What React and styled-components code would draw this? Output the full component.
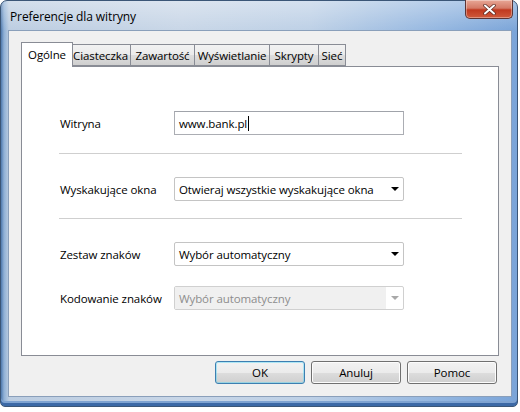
import styled, { createGlobalStyle } from 'styled-components';

const GlobalStyle = createGlobalStyle`
  html, body {
    margin: 0;
    background: #ffffff;
  }
  body {
    font-family: 'Open Sans', 'Noto Sans', sans-serif;
    font-size: 11.5px;
    letter-spacing: -0.1px;
    color: #000;
  }
`;

const Window = styled.div`
  box-sizing: border-box;
  width: 518px;
  height: 407px;
  display: flex;
  flex-direction: column;
  padding: 0 5px 9px 7px;
  border: 1px solid #3b5677;
  border-radius: 7px 7px 5px 5px;
  background:
    linear-gradient(180deg, rgba(255, 255, 255, 0.35) 0, rgba(255, 255, 255, 0) 30px),
    linear-gradient(90deg, #4f79ad 0, #8fb0d6 3px, #bccde1 8px, #c8d6e7 35%, #bdd0e6 60%, #93b6e0 85%, #7aa4d8 100%);
  box-shadow: inset 0 -3px 0 #3c69a6, inset 0 -5px 0 #7fa3d1;
`;

const TitleBar = styled.div`
  height: 29px;
  display: flex;
  justify-content: space-between;
  align-items: flex-start;
`;

const Title = styled.span`
  margin-top: 7px;
  padding-left: 2px;
  font-size: 12px;
  color: #000;
`;

const CloseButton = styled.div`
  box-sizing: border-box;
  width: 48px;
  height: 19px;
  margin-top: -1px;
  margin-right: -1px;
  display: flex;
  align-items: center;
  justify-content: center;
  border: 1px solid #5c3434;
  border-top: none;
  border-radius: 0 0 5px 5px;
  background: linear-gradient(180deg, #e8a796 0%, #d47a66 45%, #c0391f 55%, #cf5a3c 100%);
  box-shadow: inset 0 0 0 1px rgba(255, 255, 255, 0.35);
`;

const Client = styled.div`
  flex: 1;
  display: flex;
  flex-direction: column;
  padding: 11px 12px 12px 12px;
  background: #f0f0f0;
  border: 1px solid #8a9fba;
`;

const TabRow = styled.div`
  display: flex;
  align-items: flex-end;
  padding-left: 2px;
  height: 24px;
  position: relative;
  z-index: 1;
`;

const Tab = styled.div`
  box-sizing: border-box;
  width: ${({ $w }) => $w}px;
  height: ${({ $active }) => ($active ? 25 : 22)}px;
  margin: ${({ $active }) => ($active ? '0 -2px -1px -2px' : '0 0 0 -1px')};
  display: flex;
  align-items: center;
  justify-content: center;
  border: 1px solid #898c95;
  border-bottom: ${({ $active }) => ($active ? 'none' : '1px solid #898c95')};
  background: ${({ $active }) =>
    $active ? '#ffffff' : 'linear-gradient(180deg, #f2f2f2 0%, #ebebeb 50%, #dddddd 51%, #cfcfcf 100%)'};
  position: relative;
  z-index: ${({ $active }) => ($active ? 2 : 1)};
  padding-bottom: ${({ $active }) => ($active ? 2 : 0)}px;
  white-space: nowrap;
`;

const Panel = styled.div`
  box-sizing: border-box;
  height: 290px;
  background: #ffffff;
  border: 1px solid #898c95;
  padding: 44px 36px 0 37px;
  display: flex;
  flex-direction: column;
`;

const Row = styled.div`
  display: grid;
  grid-template-columns: 114px 230px;
  align-items: center;
  height: 24px;
  padding-left: 1px;
`;

const Label = styled.label`
  color: #000;
`;

const Divider = styled.div`
  height: 1px;
  background: #cfcfcf;
  margin: ${({ $top }) => $top}px 0 23px 0;
`;

const Stack = styled.div`
  display: flex;
  flex-direction: column;
  gap: 20px;
`;

const Input = styled.div`
  box-sizing: border-box;
  height: 24px;
  display: flex;
  align-items: center;
  padding-left: 4px;
  background: #fff;
  border: 1px solid #abadb3;
  border-top-color: #a0a3aa;
`;

const Caret = styled.span`
  display: inline-block;
  width: 1px;
  height: 15px;
  margin-left: 1px;
  background: #000;
`;

const Select = styled.div`
  box-sizing: border-box;
  height: 24px;
  display: flex;
  align-items: stretch;
  border: 1px solid ${({ $disabled }) => ($disabled ? '#d0d0d0' : '#c4c4c4')};
  border-radius: 2px;
  background: #fff;
  color: ${({ $disabled }) => ($disabled ? '#8d8d8d' : '#000')};
`;

const SelectText = styled.div`
  flex: 1;
  display: flex;
  align-items: center;
  padding-left: 4px;
  background: ${({ $disabled }) => ($disabled ? '#f0f0f0' : 'transparent')};
`;

const Arrow = styled.div`
  width: 17px;
  display: flex;
  align-items: center;
  justify-content: center;
  &::after {
    content: '';
    border-left: 4px solid transparent;
    border-right: 4px solid transparent;
    border-top: 4px solid ${({ $disabled }) => ($disabled ? '#a8a8a8' : '#000')};
  }
`;

const ButtonRow = styled.div`
  display: flex;
  justify-content: flex-end;
  gap: 6px;
  margin-top: 5px;
  padding-right: 2px;
`;

const Button = styled.button`
  box-sizing: border-box;
  width: 90px;
  height: 23px;
  font: inherit;
  letter-spacing: inherit;
  color: #000;
  border-radius: 3px;
  border: 1px solid ${({ $focus }) => ($focus ? '#3c7fb1' : '#707070')};
  background: linear-gradient(180deg, #f2f2f2 0%, #ebebeb 50%, #dddddd 51%, #cfcfcf 100%);
  box-shadow: inset 0 0 0 1px ${({ $focus }) => ($focus ? '#48d7fb66' : '#fcfcfc')};
  padding: 0;
`;

const tabs = [
  { name: 'Ogólne', w: 52, active: true },
  { name: 'Ciasteczka', w: 61 },
  { name: 'Zawartość', w: 65 },
  { name: 'Wyświetlanie', w: 76 },
  { name: 'Skrypty', w: 50 },
  { name: 'Sieć', w: 28 },
];

const Dropdown = ({ value, disabled }) => (
  <Select $disabled={disabled}>
    <SelectText $disabled={disabled}>{value}</SelectText>
    <Arrow $disabled={disabled} />
  </Select>
);

export default function App() {
  return (
    <>
      <GlobalStyle />
      <Window>
        <TitleBar>
          <Title>Preferencje dla witryny</Title>
          <CloseButton>
            <svg width="13" height="11" viewBox="0 0 13 11">
              <path
                d="M2 1.5 L11 9.5 M11 1.5 L2 9.5"
                stroke="#5a2a22"
                strokeWidth="3.4"
                strokeLinecap="round"
              />
              <path
                d="M2 1.5 L11 9.5 M11 1.5 L2 9.5"
                stroke="#ffffff"
                strokeWidth="2"
                strokeLinecap="round"
              />
            </svg>
          </CloseButton>
        </TitleBar>
        <Client>
          <TabRow>
            {tabs.map((t) => (
              <Tab key={t.name} $w={t.w} $active={t.active}>
                {t.name}
              </Tab>
            ))}
          </TabRow>
          <Panel>
            <Row>
              <Label>Witryna</Label>
              <Input>
                www.bank.pl
                <Caret />
              </Input>
            </Row>
            <Divider $top={18} />
            <Row>
              <Label>Wyskakujące okna</Label>
              <Dropdown value="Otwieraj wszystkie wyskakujące okna" />
            </Row>
            <Divider $top={17} />
            <Stack>
              <Row>
                <Label>Zestaw znaków</Label>
                <Dropdown value="Wybór automatyczny" />
              </Row>
              <Row>
                <Label>Kodowanie znaków</Label>
                <Dropdown value="Wybór automatyczny" disabled />
              </Row>
            </Stack>
          </Panel>
          <ButtonRow>
            <Button $focus>OK</Button>
            <Button>Anuluj</Button>
            <Button>Pomoc</Button>
          </ButtonRow>
        </Client>
      </Window>
    </>
  );
}
